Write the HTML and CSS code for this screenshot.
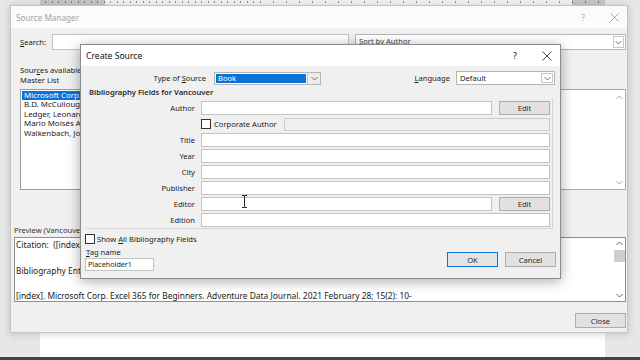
FILE: index.html
```html
<!DOCTYPE html>
<html lang="en">
<head>
<meta charset="utf-8">
<title>Create Source</title>
<link rel="stylesheet" href="styles.css">
</head>
<body>
<div class="app">
  <div class="ruler"></div>
  <div class="workspace">
    <div class="page"></div>
  </div>
  <div class="statusbar"></div>

  <section class="win sm">
    <header class="titlebar sm-title">
      <span class="tb-text">Source Manager</span>
      <span class="tb-icons">
        <span class="tb-q">?</span>
        <svg class="tb-x" width="9" height="9" viewBox="0 0 9 9"><path d="M0.5 0.5L8.5 8.5M8.5 0.5L0.5 8.5" stroke="currentColor" stroke-width="0.9" fill="none"/></svg>
      </span>
    </header>
    <div class="sm-body">
      <div class="search-row">
        <label class="search-label"><u>S</u>earch:</label>
        <div class="input search-input"></div>
        <div class="combo sort-combo">
          <span class="combo-text">Sort by Author</span>
          <span class="combo-arrow"><svg width="7" height="5" viewBox="0 0 7 5"><path d="M0.5 1L3.5 4L6.5 1" stroke="#666" stroke-width="0.9" fill="none"/></svg></span>
        </div>
      </div>
      <div class="sources-label">Sour<u>c</u>es available in:</div>
      <div class="master-label">Master List</div>
      <div class="lists">
        <ul class="listbox master">
          <li class="sel">Microsoft Corp.</li>
          <li>B.D. McCullough</li>
          <li>Ledger, Leonard</li>
          <li>Mario Moisés Alvarez</li>
          <li>Walkenbach, John</li>
        </ul>
        <div class="listbox current">
          <div class="lb-fill"></div>
          <div class="vscroll">
            <svg width="7" height="5" viewBox="0 0 7 5"><path d="M0.5 4L3.5 1L6.5 4" stroke="#9a9a9a" stroke-width="0.9" fill="none"/></svg>
            <span class="vs-track"></span>
            <svg width="7" height="5" viewBox="0 0 7 5"><path d="M0.5 1L3.5 4L6.5 1" stroke="#9a9a9a" stroke-width="0.9" fill="none"/></svg>
          </div>
        </div>
      </div>
      <div class="preview-label">Preview (Vancouver):</div>
      <div class="preview">
        <div class="pv-text">
          <p class="pv-line">Citation:&nbsp; ([index])</p>
          <p class="pv-line pv-bib">Bibliography Entry:</p>
          <p class="pv-line pv-entry">[index]. Microsoft Corp. Excel 365 for Beginners. Adventure Data Journal. 2021 February 28; 15(2): 10-</p>
        </div>
        <div class="vscroll pv-scroll">
          <svg width="7" height="5" viewBox="0 0 7 5"><path d="M0.5 4L3.5 1L6.5 4" stroke="#555" stroke-width="0.9" fill="none"/></svg>
          <span class="vs-thumb"></span>
          <span class="vs-track"></span>
          <svg width="7" height="5" viewBox="0 0 7 5"><path d="M0.5 1L3.5 4L6.5 1" stroke="#555" stroke-width="0.9" fill="none"/></svg>
        </div>
      </div>
      <div class="close-row">
        <button class="btn close-btn">Close</button>
      </div>
    </div>
  </section>

  <section class="win cs">
    <header class="titlebar cs-title">
      <span class="tb-text">Create Source</span>
      <span class="tb-icons">
        <span class="tb-q">?</span>
        <svg class="tb-x" width="10" height="10" viewBox="0 0 10 10"><path d="M0.5 0.5L9.5 9.5M9.5 0.5L0.5 9.5" stroke="currentColor" stroke-width="0.9" fill="none"/></svg>
      </span>
    </header>
    <div class="cs-body">
      <div class="type-row">
        <label class="type-label">Type of <u>S</u>ource</label>
        <div class="combo type-combo">
          <span class="combo-text sel-text">Book</span>
          <span class="combo-arrow"><svg width="7" height="5" viewBox="0 0 7 5"><path d="M0.5 1L3.5 4L6.5 1" stroke="#666" stroke-width="0.9" fill="none"/></svg></span>
        </div>
        <label class="lang-label"><u>L</u>anguage</label>
        <div class="combo lang-combo">
          <span class="combo-text">Default</span>
          <span class="combo-arrow"><svg width="7" height="5" viewBox="0 0 7 5"><path d="M0.5 1L3.5 4L6.5 1" stroke="#666" stroke-width="0.9" fill="none"/></svg></span>
        </div>
      </div>
      <div class="fields-heading">Bibliography Fields for Vancouver</div>
      <div class="fields">
        <label class="f-label">Author</label>
        <div class="f-ctl"><div class="input grow"></div><button class="btn edit-btn">Edit</button></div>

        <span class="f-label"></span>
        <div class="f-ctl corp">
          <span class="checkbox"></span>
          <span class="corp-label">Corporate Author</span>
          <div class="input disabled corp-input"></div>
        </div>

        <label class="f-label">Title</label>
        <div class="f-ctl"><div class="input grow"></div></div>

        <label class="f-label">Year</label>
        <div class="f-ctl"><div class="input grow"></div></div>

        <label class="f-label">City</label>
        <div class="f-ctl"><div class="input grow"></div></div>

        <label class="f-label">Publisher</label>
        <div class="f-ctl"><div class="input grow"></div></div>

        <label class="f-label">Editor</label>
        <div class="f-ctl"><div class="input grow"></div><button class="btn edit-btn">Edit</button></div>

        <label class="f-label">Edition</label>
        <div class="f-ctl"><div class="input grow"></div></div>
      </div>
      <div class="cs-bottom">
        <div class="cs-left">
          <div class="showall"><span class="checkbox"></span><span>Show <u>A</u>ll Bibliography Fields</span></div>
          <div class="tag-label"><u>T</u>ag name</div>
          <div class="input tag-input">Placeholder1</div>
        </div>
        <div class="cs-btns">
          <button class="btn ok-btn">OK</button>
          <button class="btn">Cancel</button>
        </div>
      </div>
    </div>
  </section>

  <svg class="ibeam" width="7" height="13" viewBox="0 0 7 13"><path d="M1 0.5H3C3.3 0.5 3.5 0.8 3.5 1.2V11.8C3.5 12.2 3.7 12.5 4 12.5H6M6 0.5H4C3.7 0.5 3.5 0.8 3.5 1.2M3.5 11.8C3.5 12.2 3.3 12.5 3 12.5H1" stroke="#111" stroke-width="0.9" fill="none"/></svg>
</div>
</body>
</html>
```

FILE: styles.css
```css
* { box-sizing: border-box; margin: 0; padding: 0; }

html, body { width: 640px; height: 360px; overflow: hidden; }

body {
  font-family: "Noto Sans", "Open Sans", sans-serif;
  font-size: 7.6px;
  color: #1b1b1b;
  background: #e7e7e7;
}

u { text-decoration: underline; text-underline-offset: 1px; }

button { font: inherit; color: inherit; }

.app {
  position: relative;
  width: 640px;
  height: 360px;
  display: flex;
  flex-direction: column;
  background: #e7e7e7;
}

/* Word background */
.ruler {
  height: 5px;
  background:
    repeating-linear-gradient(90deg, transparent 0 5.5px, rgba(60,60,60,.55) 5.5px 6.5px) 40px 1px / 565px 2px no-repeat,
    linear-gradient(90deg, #e7e7e7 0 40px, #c8c8c8 40px 105px, #f3f3f3 105px 572px, #c8c8c8 572px 605px, #e7e7e7 605px);
}

.workspace {
  flex: 1;
  display: flex;
  padding-left: 40px;
}

.page { width: 565px; background: #ffffff; }

.statusbar { height: 3px; background: #444444; }

/* windows */
.win {
  position: absolute;
  display: flex;
  flex-direction: column;
  background: #f0f0f0;
}

.titlebar {
  display: flex;
  align-items: center;
  background: #ffffff;
  flex: none;
}

.tb-icons {
  margin-left: auto;
  display: flex;
  align-items: center;
  gap: 14px;
  padding-right: 6px;
}

.tb-q { width: 20px; text-align: center; font-size: 9px; }
.tb-x { display: block; margin: 0 2.5px; }

/* Source Manager */
.sm {
  left: 10px;
  top: 5px;
  width: 618px;
  height: 328px;
  border: 1px solid #c4c4c4;
  box-shadow: 0 1px 8px rgba(0,0,0,.18);
}

.sm-title {
  height: 22px;
  padding-left: 5px;
  color: #a2a2a2;
  background: #fbfbfb;
  font-size: 8.2px;
}

.sm-title .tb-q { color: #a8a8a8; }
.sm-title .tb-x { color: #9a9a9a; }

.sm-body {
  flex: 1;
  display: flex;
  flex-direction: column;
  padding: 6px 1px 0 9px;
}

.search-row {
  display: flex;
  align-items: center;
  height: 16px;
}

.search-label { width: 32px; }

.input {
  background: #ffffff;
  border: 1px solid #c3c3c3;
}

.search-input { width: 297px; height: 16px; margin-right: 6px; }

.combo {
  display: flex;
  align-items: stretch;
  background: #ffffff;
  border: 1px solid #b5b5b5;
}

.combo-text {
  flex: 1;
  display: flex;
  align-items: center;
  padding-left: 3px;
  white-space: nowrap;
  overflow: hidden;
}

.combo-arrow {
  width: 12px;
  display: flex;
  align-items: center;
  justify-content: center;
  background: #ececec;
  border-left: 1px solid #c8c8c8;
}

.combo-arrow svg { display: block; }

.sort-combo { flex: 1; height: 16px; }
.sort-combo .combo-text { color: #444; align-items: flex-start; padding-top: 1px; }
.sort-combo .combo-arrow { background: #ffffff; border: 1px solid #c8c8c8; margin: 1px; width: 11px; }

.sources-label { margin-top: 15px; line-height: 10px; }
.master-label { line-height: 10px; }

.lists {
  margin-top: 4px;
  height: 101px;
  display: flex;
}

.listbox {
  background: #ffffff;
  border: 1px solid #9c9c9c;
  list-style: none;
}

.master {
  width: 210px;
  padding: 1px;
  font-size: 7.9px;
}

.master li {
  height: 9.4px;
  line-height: 9.4px;
  padding-left: 2px;
  white-space: nowrap;
  color: #222;
}

.master li.sel { background: #0a74d6; color: #ffffff; }

.current {
  margin-left: auto;
  width: 256px;
  display: flex;
  border-color: #aaaaaa;
}

.lb-fill { flex: 1; }

.vscroll {
  width: 11px;
  display: flex;
  flex-direction: column;
  align-items: center;
  padding: 5px 0 4px;
  gap: 2px;
}

.vscroll svg { display: block; flex: none; }

.vs-track { flex: 1; }

.vs-thumb {
  align-self: stretch;
  height: 12px;
  background: #cdcdcd;
  margin-top: 2px;
}

.preview-label {
  margin-top: 35px;
  margin-left: -6px;
  line-height: 10px;
  color: #333;
}

.preview {
  margin-top: 2px;
  margin-left: -6px;
  height: 65px;
  display: flex;
  background: #ffffff;
  border: 1px solid #8f8f8f;
  overflow: hidden;
}

.pv-text {
  flex: 1;
  padding: 2px 0 0 1px;
  font-size: 8.4px;
  color: #1a1a1a;
  white-space: nowrap;
  overflow: hidden;
}

.pv-line { line-height: 10px; }
.pv-bib { margin-top: 16px; }
.pv-entry { margin-top: 15px; }

.pv-scroll { padding: 3px 0 3px; }

.close-row {
  margin-top: 11px;
  display: flex;
  justify-content: flex-end;
}

.btn {
  height: 15px;
  width: 51px;
  background: #e1e1e1;
  border: 1px solid #adadad;
  display: flex;
  align-items: center;
  justify-content: center;
  color: #2a2a2a;
}

/* Create Source */
.cs {
  left: 80px;
  top: 44px;
  width: 481px;
  height: 235px;
  border: 1px solid #8c8c8c;
  box-shadow: 0 2px 12px rgba(0,0,0,.35);
}

.cs-title {
  height: 21px;
  padding-left: 5px;
  font-size: 8.6px;
  color: #111;
}

.cs-title .tb-icons { padding-right: 6px; }
.cs-title .tb-x { color: #333; }

.cs-body {
  flex: 1;
  display: flex;
  flex-direction: column;
  padding: 5px 4px 0 4px;
}

.type-row {
  display: flex;
  align-items: center;
  height: 14px;
}

.type-label { width: 121px; text-align: right; margin-right: 8px; }

.type-combo { width: 107px; height: 13px; }
.type-combo .combo-text { padding-left: 1px; }
.sel-text {
  background: #0a74d6;
  color: #ffffff;
  margin: 1px;
  padding-left: 2px !important;
}
.type-combo .combo-arrow { width: 13px; }

.lang-label { margin-left: auto; margin-right: 6px; }

.lang-combo { width: 99px; height: 14px; margin-right: 1px; }
.lang-combo .combo-arrow { width: 12px; background: #ffffff; border: 1px solid #c8c8c8; margin: 1px; }

.fields-heading {
  margin-top: 2px;
  padding-left: 4px;
  line-height: 10px;
  font-weight: 600;
  color: #2a2a2a;
}

.fields {
  margin-top: 1px;
  margin-left: 1px;
  width: 467px;
  padding: 3px 2px 1px 0;
  border-right: 1px solid #d6d6d6;
  border-bottom: 1px solid #d6d6d6;
  display: grid;
  grid-template-columns: 109px 1fr;
  column-gap: 6px;
  row-gap: 2px;
  grid-auto-rows: 14px;
}

.f-label {
  text-align: right;
  line-height: 14px;
  color: #222;
}

.f-ctl {
  display: flex;
  align-items: stretch;
  gap: 7px;
}

.grow { flex: 1; }

.edit-btn { height: 14px; }

.corp { align-items: center; gap: 0; }

.checkbox {
  width: 10px;
  height: 10px;
  flex: none;
  background: #ffffff;
  border: 1px solid #333333;
}

.corp-label { margin-left: 3px; }

.corp-input { margin-left: auto; width: 266px; height: 13px; }

.input.disabled { background: #f0f0f0; border-color: #cccccc; }

.cs-bottom {
  display: flex;
  margin-top: 5px;
}

.cs-left { display: flex; flex-direction: column; }

.showall {
  display: flex;
  align-items: center;
  gap: 2px;
  height: 10px;
}

.tag-label { margin-top: 3px; margin-left: 1px; line-height: 10px; }

.tag-input {
  margin-top: 1px;
  width: 69px;
  height: 13px;
  line-height: 11px;
  padding-left: 2px;
  font-size: 7.2px;
  color: #222;
}

.cs-btns {
  margin-left: auto;
  margin-top: 18px;
  display: flex;
  gap: 7px;
  align-self: flex-start;
}

.ok-btn {
  border-color: #0a74d6;
  box-shadow: inset 0 0 0 1px #d7e7f5;
  background: #e3e3e3;
}

.ibeam {
  position: absolute;
  left: 241px;
  top: 195px;
}
```
